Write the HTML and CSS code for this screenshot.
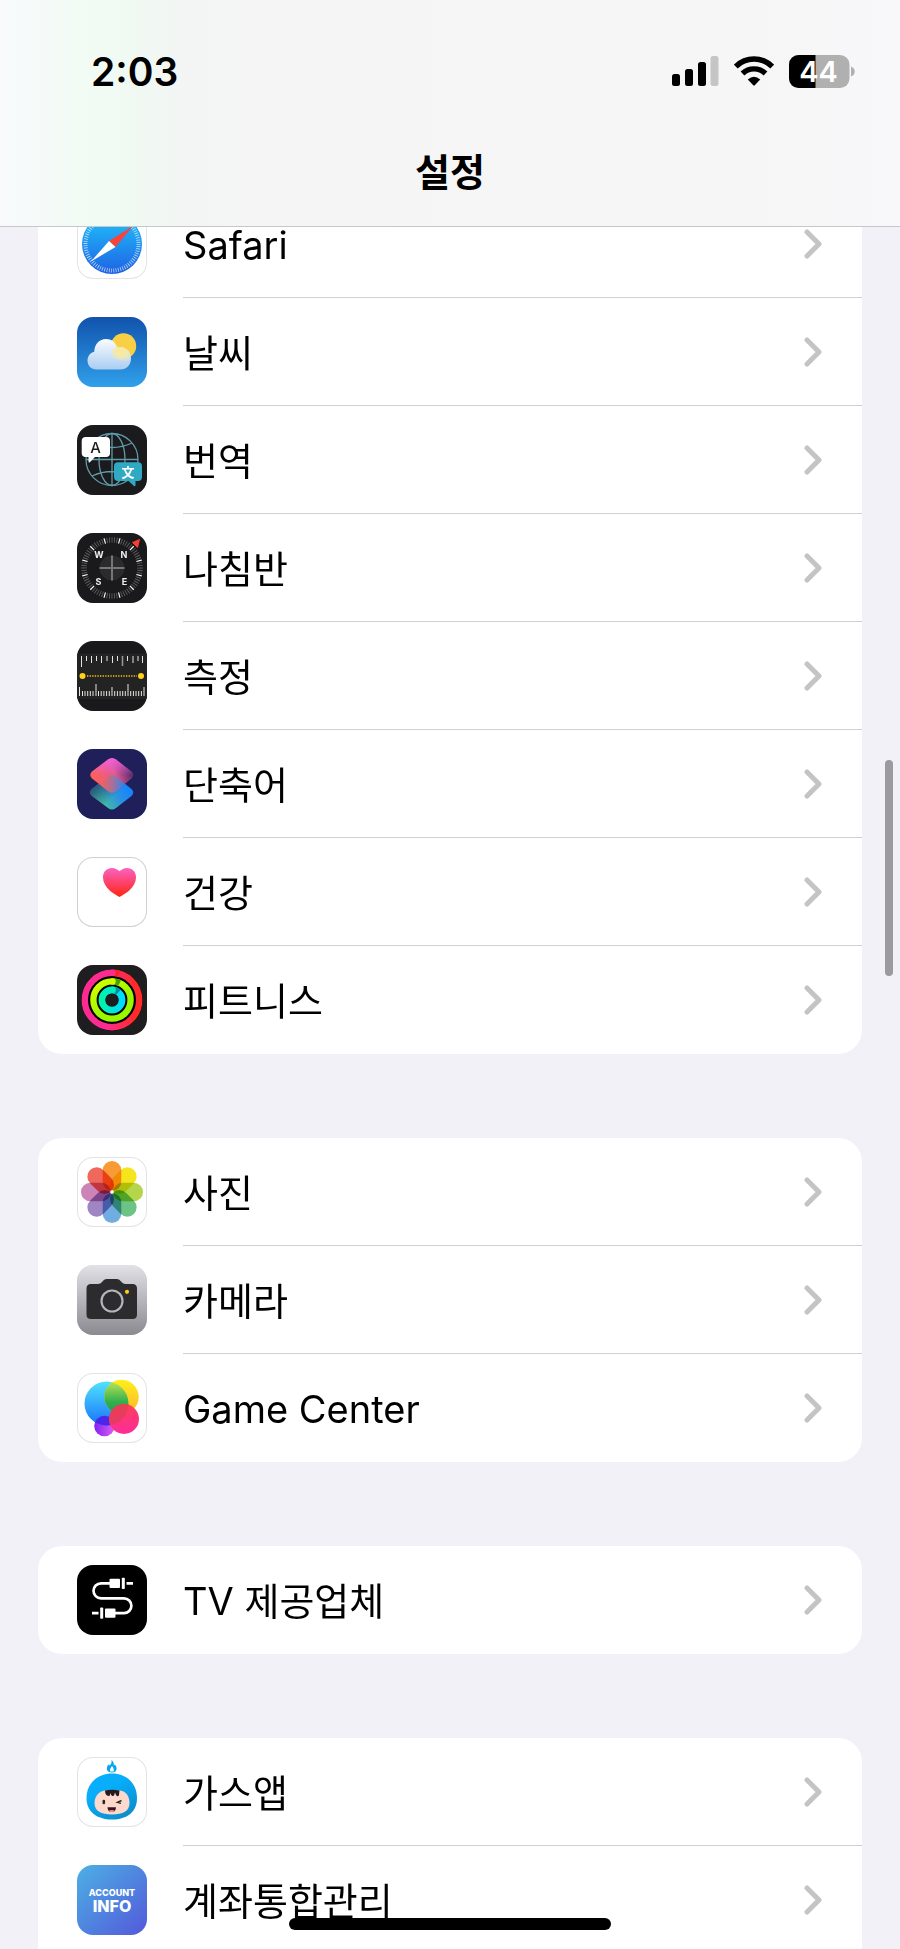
FILE: index.html
```html
<!DOCTYPE html>
<html lang="ko">
<head>
    <meta charset="UTF-8">
    <meta name="viewport" content="width=device-width, initial-scale=1.0">
    <title>설정</title>
    <link rel="stylesheet" href="styles.css">
</head>
<body>
    <header class="header">
        <div class="status-bar">
            <span class="time">2:03</span>
            <div class="status-icons">
                <svg width="47" height="30" viewBox="0 0 47 30">
                    <rect x="0" y="18" width="8" height="12" rx="2.5"/>
                    <rect x="13" y="13" width="8" height="17" rx="2.5"/>
                    <rect x="26" y="6" width="8" height="24" rx="2.5"/>
                    <rect x="38.500" y="0" width="8" height="30" rx="2.5" fill="#c5c5c5"/>
                </svg>
                <svg width="40" height="30" viewBox="0 0 40 30">
                    <path d="M1.800 10.500 A26 26 0 0 1 38.200 10.500" fill="none" stroke="#000" stroke-width="5.400"/>
                    <path d="M8.500 17.500 A16.500 16.500 0 0 1 31.500 17.500" fill="none" stroke="#000" stroke-width="5.400"/>
                    <path d="M13.800 23.400 Q20 18.200 26.200 23.400 L21 29 Q20 30 19 29 Z"/>
                </svg>
                <svg class="battery" width="66" height="33" viewBox="0 0 66 33">
                    <rect x="0" y="0" width="60.500" height="33" rx="9.500" fill="#b0b0b0"/>
                    <path d="M9.500 0 H26.500 V33 H9.500 A9.500 9.500 0 0 1 0 23.500 V9.500 A9.500 9.500 0 0 1 9.500 0 Z"/>
                    <path d="M62 11.500 Q65.700 13 65.700 16.500 T62 21.500 Z" fill="#b0b0b0"/>
                    <text x="29.500" y="27" text-anchor="middle" class="battery-text">44</text>
                </svg>
            </div>
        </div>
        <h1 class="title">설정</h1>
    </header>

    <main class="content">
        <nav class="group">
            <a class="row" href="#safari">
                <svg class="icon outlined" viewBox="0 0 70 70">
                    <defs><linearGradient id="safariBg" x1="0" y1="0" x2="0" y2="1"><stop offset="0" stop-color="#1fc4fb"/><stop offset="1" stop-color="#1f62e4"/></linearGradient></defs>
                    <circle cx="35" cy="35" r="30" fill="url(#safariBg)"/>
                    <circle cx="35" cy="35" r="26.500" fill="none" stroke="#fff" stroke-opacity="0.7" stroke-width="4" stroke-dasharray="0.800 1.500"/>
                    <path d="M56 17 L38.500 38 L32 32 Z" fill="#f8423a"/>
                    <path d="M14 52.500 L32 32 L38.500 38 Z" fill="#fff"/>
                </svg>
                <span class="cell"><span class="name">Safari</span><svg class="arrow" viewBox="0 0 18 30"><path d="M3 3 L15 15 L3 27"/></svg></span>
            </a>
            <a class="row" href="#weather">
                <svg class="icon" viewBox="0 0 70 70">
                    <defs>
                        <linearGradient id="weatherBg" x1="0" y1="0" x2="0" y2="1"><stop offset="0" stop-color="#1153ac"/><stop offset="1" stop-color="#30a0ea"/></linearGradient>
                        <linearGradient id="cloud" x1="0" y1="0" x2="0" y2="1"><stop offset="0" stop-color="#fbfcff"/><stop offset="1" stop-color="#a9cdf1"/></linearGradient>
                        <radialGradient id="glow" gradientUnits="userSpaceOnUse" cx="44" cy="33" r="14"><stop offset="0.4" stop-color="#f6e9a4"/><stop offset="1" stop-color="#f6e9a4" stop-opacity="0"/></radialGradient>
                    </defs>
                    <rect width="70" height="70" fill="url(#weatherBg)"/>
                    <circle cx="46.500" cy="29" r="12.700" fill="#fbcf45"/>
                    <path d="M19.500 52.500 C14 52.500 10.500 48.500 10.500 43.500 C10.500 39 13.500 35.600 17.200 34.700 C17.500 27 22.500 22 29 22 C34.500 22 38.500 25.500 40 30.300 C47.500 28.500 54 34 54 41.500 C54 48 49.500 52.500 43.500 52.500 Z" fill="url(#cloud)"/>
                    <path d="M36 41 L35 33 L40 30.300 C47.500 28.500 54 34 54 41.500 C54 43 53 45 53 45 Z" fill="url(#glow)"/>
                </svg>
                <span class="cell"><span class="name">날씨</span><svg class="arrow" viewBox="0 0 18 30"><path d="M3 3 L15 15 L3 27"/></svg></span>
            </a>
            <a class="row" href="#translate">
                <svg class="icon" viewBox="0 0 70 70">
                    <rect width="70" height="70" fill="#1b1b1d"/>
                    <g fill="none" stroke="#609baa" stroke-width="1.300">
                        <circle cx="35" cy="34.500" r="26"/>
                        <ellipse cx="35" cy="34.500" rx="13" ry="26"/>
                        <path d="M35 8.500 V60.500 M9 34.500 H61 M15 18 Q35 27 55 18 M15 51 Q35 42 55 51"/>
                    </g>
                    <path d="M8.700 12 H29 Q33 12 33 16 V28 Q33 32 29 32 H18 L12.500 37.500 Q11.500 38 11.500 36 V32 H8.700 Q4.700 32 4.700 28 V16 Q4.700 12 8.700 12 Z" fill="#fff"/>
                    <path d="M41 37.300 H61 Q65 37.300 65 41.300 V52 Q65 56 61 56 H58.500 V60 Q58.300 62 57 61 L51.500 56 H41 Q37 56 37 52 V41.300 Q37 37.300 41 37.300 Z" fill="#30a9c3"/>
                    <text x="18.500" y="27.500" font-size="15" text-anchor="middle" font-weight="500" fill="#1b1b1d">A</text>
                    <text x="51" y="51.500" font-size="13" text-anchor="middle" font-weight="700" fill="#fff">文</text>
                </svg>
                <span class="cell"><span class="name">번역</span><svg class="arrow" viewBox="0 0 18 30"><path d="M3 3 L15 15 L3 27"/></svg></span>
            </a>
            <a class="row" href="#compass">
                <svg class="icon" viewBox="0 0 70 70">
                    <rect width="70" height="70" fill="#1a1a1c"/>
                    <g fill="none" transform="rotate(15 35 35)">
                        <circle cx="35" cy="35" r="28" stroke="#68686a" stroke-width="5.500" pathLength="360" stroke-dasharray="1.600 3.400" stroke-dashoffset="0.800"/>
                        <circle cx="35" cy="35" r="28" stroke="#f4f4f4" stroke-width="5.500" pathLength="360" stroke-dasharray="2.400 27.600" stroke-dashoffset="1.200"/>
                    </g>
                    <path d="M62.500 6.500 L60.500 14.500 L55.500 9.500 Z" fill="#fb3c30" stroke="#fb3c30" stroke-linejoin="round"/>
                    <circle cx="35" cy="35" r="12.500" fill="#2b2b2d"/>
                    <path d="M35 22.500 V47.500 M22.500 35 H47.500" stroke="#767678" stroke-width="2"/>
                    <g font-size="9" font-weight="700" text-anchor="middle" fill="#eee">
                        <text x="22" y="25.300">W</text>
                        <text x="47" y="25.300">N</text>
                        <text x="21.500" y="52">S</text>
                        <text x="47.500" y="52">E</text>
                    </g>
                </svg>
                <span class="cell"><span class="name">나침반</span><svg class="arrow" viewBox="0 0 18 30"><path d="M3 3 L15 15 L3 27"/></svg></span>
            </a>
            <a class="row" href="#measure">
                <svg class="icon" viewBox="0 0 70 70">
                    <rect width="70" height="70" fill="#19191b"/>
                    <rect y="12.500" width="70" height="45.500" fill="#232324"/>
                    <g fill="none" stroke="#e4e4e4" stroke-width="1">
                        <path d="M4.500 15 V26 M9.500 15 V20 M14.500 15 V22 M19.500 15 V20 M24.500 15 V22 M30 15 V20 M35.500 15 V22 M40.500 15 V20 M50.500 15 V20 M56 15 V22 M61 15 V20 M65.500 15 V22"/>
                        <path d="M45.500 15 V25" stroke="#999" stroke-width="1.500"/>
                        <path d="M2.500 46 V55 M19 43 V55 M35 46 V55 M51 43 V55 M67 46 V55"/>
                        <path d="M5.500 50 V55 M8 50 V55 M10.700 50 V55 M13.300 50 V55 M16 50 V55 M21.500 50 V55 M24.200 50 V55 M26.900 50 V55 M29.600 50 V55 M32.300 50 V55 M37.700 50 V55 M40.400 50 V55 M43.100 50 V55 M45.700 50 V55 M48.300 50 V55 M53.700 50 V55 M56.400 50 V55 M59 50 V55 M61.700 50 V55 M64.400 50 V55"/>
                    </g>
                    <path d="M10 35 H60" stroke="#f8c51c" stroke-width="1.300" stroke-dasharray="1.300 1.300"/>
                    <circle cx="5.500" cy="35" r="3" fill="#ffd01c"/>
                    <circle cx="64" cy="35" r="3" fill="#ffd01c"/>
                </svg>
                <span class="cell"><span class="name">측정</span><svg class="arrow" viewBox="0 0 18 30"><path d="M3 3 L15 15 L3 27"/></svg></span>
            </a>
            <a class="row" href="#shortcuts">
                <svg class="icon" viewBox="0 0 70 70">
                    <defs>
                        <linearGradient id="cutTop" gradientUnits="userSpaceOnUse" x1="20" y1="34" x2="54" y2="24"><stop offset="0" stop-color="#fb615a"/><stop offset="0.550" stop-color="#e05a94"/><stop offset="1" stop-color="#5d2f6e"/></linearGradient>
                        <linearGradient id="cutPink" gradientUnits="userSpaceOnUse" x1="0" y1="8" x2="0" y2="26"><stop offset="0" stop-color="#f45fe0"/><stop offset="1" stop-color="#f45fe0" stop-opacity="0"/></linearGradient>
                        <linearGradient id="cutBottom" gradientUnits="userSpaceOnUse" x1="24" y1="56" x2="50" y2="38"><stop offset="0" stop-color="#45c29a"/><stop offset="0.600" stop-color="#2b92df"/><stop offset="1" stop-color="#1684ff"/></linearGradient>
                        <linearGradient id="cutFade" gradientUnits="userSpaceOnUse" x1="14" y1="38" x2="30" y2="54"><stop offset="0" stop-color="#264a78"/><stop offset="1" stop-color="#264a78" stop-opacity="0"/></linearGradient>
                        <linearGradient id="cutMix" gradientUnits="userSpaceOnUse" x1="25" y1="35" x2="46" y2="36"><stop offset="0" stop-color="#ef6064"/><stop offset="0.500" stop-color="#a8709a"/><stop offset="1" stop-color="#3b84de"/></linearGradient>
                    </defs>
                    <rect width="70" height="70" fill="#1f1f5a"/>
                    <path d="M31 27.500 Q35 24.500 39 27.500 L54.500 40 Q58 43.500 54.500 47 L39 59 Q35 62 31 59 L15 47 Q11.500 43.500 15 40 Z" fill="url(#cutBottom)"/>
                    <path d="M31 27.500 Q35 24.500 39 27.500 L54.500 40 Q58 43.500 54.500 47 L39 59 Q35 62 31 59 L15 47 Q11.500 43.500 15 40 Z" fill="url(#cutFade)"/>
                    <path d="M31 10.500 Q35 7.500 39 10.500 L54.500 22.500 Q58 26 54.500 29.500 L39 42 Q35 45 31 42 L15 29.500 Q11.500 26 15 22.500 Z" fill="url(#cutTop)"/>
                    <path d="M31 10.500 Q35 7.500 39 10.500 L54.500 22.500 Q57 25 56 27 H14 Q12.500 25 15 22.500 Z" fill="url(#cutPink)"/>
                    <path d="M31 27.500 Q35 24.500 39 27.500 L47.500 35 L39 42 Q35 45 31 42 L22.500 35 Z" fill="url(#cutMix)"/>
                </svg>
                <span class="cell"><span class="name">단축어</span><svg class="arrow" viewBox="0 0 18 30"><path d="M3 3 L15 15 L3 27"/></svg></span>
            </a>
            <a class="row" href="#health">
                <svg class="icon outlined dark" viewBox="0 0 70 70">
                    <defs><linearGradient id="heart" x1="0" y1="0" x2="0" y2="1"><stop offset="0" stop-color="#fb61c3"/><stop offset="1" stop-color="#ff2512"/></linearGradient></defs>
                    <path d="M42.500 40 C37 37 26 30.500 26 20.500 C26 14.500 30 11 34.800 11 C38.500 11 41 13 42.500 14.200 C44 13 46.500 11 50.200 11 C55 11 59 14.500 59 20.500 C59 30.500 48 37 42.500 40 Z" fill="url(#heart)"/>
                </svg>
                <span class="cell"><span class="name">건강</span><svg class="arrow" viewBox="0 0 18 30"><path d="M3 3 L15 15 L3 27"/></svg></span>
            </a>
            <a class="row" href="#fitness">
                <svg class="icon" viewBox="0 0 70 70">
                    <defs>
                        <linearGradient id="move"><stop offset="0.400" stop-color="#fb2b91"/><stop offset="0.900" stop-color="#ff2a2a"/></linearGradient>
                        <linearGradient id="exercise" x1="0" y1="0" x2="0.800" y2="1"><stop offset="0" stop-color="#d9ff00"/><stop offset="0.700" stop-color="#97f800"/></linearGradient>
                        <linearGradient id="stand"><stop offset="0" stop-color="#00f2ac"/><stop offset="1" stop-color="#00dcff"/></linearGradient>
                    </defs>
                    <rect width="70" height="70" fill="#1e1e20"/>
                    <circle cx="35" cy="35" r="30.500" fill="#000"/>
                    <g fill="none">
                        <circle cx="35" cy="35" r="27.200" stroke="url(#move)" stroke-width="6.400"/>
                        <circle cx="35" cy="35" r="18.600" stroke="url(#exercise)" stroke-width="6.400"/>
                        <circle cx="35" cy="35" r="10" stroke="url(#stand)" stroke-width="6.800"/>
                    </g>
                    <path d="M37 4.700 Q40 4.700 43 5.800 L41 12 Q38 11 37 11 Z" fill="#ff2216"/>
                    <path d="M37 13.400 Q41 13.400 44 15.500 L41 21 Q39 19.800 37 19.800 Z" fill="#45a100"/>
                    <path d="M37 22 Q41 22.500 43.500 25 L39 30 L37 28 Z" fill="#008f9f"/>
                    <circle cx="35.500" cy="7.800" r="3.200" fill="#fb2b91"/>
                    <circle cx="35.500" cy="16.500" r="3.200" fill="#d2fb00"/>
                    <circle cx="35.500" cy="25" r="3.400" fill="#00ecb9"/>
                    <circle cx="35" cy="35" r="6.500" fill="#1e1e20"/>
                </svg>
                <span class="cell"><span class="name">피트니스</span><svg class="arrow" viewBox="0 0 18 30"><path d="M3 3 L15 15 L3 27"/></svg></span>
            </a>
        </nav>

        <nav class="group">
            <a class="row" href="#photos">
                <svg class="icon outlined" viewBox="0 0 70 70">
                    <g class="petals">
                        <rect x="25.700" y="4" width="18.600" height="30" rx="9.300" fill="#f89b35"/>
                        <rect x="25.700" y="4" width="18.600" height="30" rx="9.300" fill="#f6e41e" transform="rotate(45 35 35)"/>
                        <rect x="25.700" y="4" width="18.600" height="30" rx="9.300" fill="#b5d64a" transform="rotate(90 35 35)"/>
                        <rect x="25.700" y="4" width="18.600" height="30" rx="9.300" fill="#6cc385" transform="rotate(135 35 35)"/>
                        <rect x="25.700" y="4" width="18.600" height="30" rx="9.300" fill="#71ade0" transform="rotate(180 35 35)"/>
                        <rect x="25.700" y="4" width="18.600" height="30" rx="9.300" fill="#9f86c3" transform="rotate(225 35 35)"/>
                        <rect x="25.700" y="4" width="18.600" height="30" rx="9.300" fill="#cc83b7" transform="rotate(270 35 35)"/>
                        <rect x="25.700" y="4" width="18.600" height="30" rx="9.300" fill="#f0675b" transform="rotate(315 35 35)"/>
                    </g>
                    <circle cx="35" cy="35" r="1.800" fill="#fff"/>
                </svg>
                <span class="cell"><span class="name">사진</span><svg class="arrow" viewBox="0 0 18 30"><path d="M3 3 L15 15 L3 27"/></svg></span>
            </a>
            <a class="row" href="#camera">
                <svg class="icon outlined" viewBox="0 0 70 70">
                    <defs><linearGradient id="cameraBg" x1="0" y1="0" x2="0" y2="1"><stop offset="0" stop-color="#e2e1e7"/><stop offset="1" stop-color="#8b8a90"/></linearGradient></defs>
                    <rect width="70" height="70" fill="url(#cameraBg)"/>
                    <path d="M14 19 H21 Q23.500 19 25 17 Q27 14 29.500 14 H40 Q42.500 14 44.500 17 Q46 19 48.500 19 H55.500 Q60 19 60 23.500 V49.500 Q60 54 55.500 54 H14 Q9.500 54 9.500 49.500 V23.500 Q9.500 19 14 19 Z" fill="#2c2c2e"/>
                    <circle cx="35" cy="36" r="10.500" fill="#2c2c2e" stroke="#b5b5b9" stroke-width="2.200"/>
                    <circle cx="50" cy="26.800" r="2.100" fill="#fccb17"/>
                </svg>
                <span class="cell"><span class="name">카메라</span><svg class="arrow" viewBox="0 0 18 30"><path d="M3 3 L15 15 L3 27"/></svg></span>
            </a>
            <a class="row" href="#gamecenter">
                <svg class="icon outlined" viewBox="0 0 70 70">
                    <defs>
                        <linearGradient id="gcBlue" x1="0" y1="0" x2="0" y2="1"><stop offset="0" stop-color="#50e2fe"/><stop offset="1" stop-color="#1773fb"/></linearGradient>
                        <linearGradient id="gcYellow" x1="0" y1="0" x2="0" y2="1"><stop offset="0" stop-color="#ffef1c"/><stop offset="1" stop-color="#fdb42a"/></linearGradient>
                        <linearGradient id="gcGreen" gradientUnits="userSpaceOnUse" x1="0" y1="8" x2="0" y2="38"><stop offset="0" stop-color="#bfe557"/><stop offset="0.700" stop-color="#30b04c"/><stop offset="1" stop-color="#2a9c5d"/></linearGradient>
                        <linearGradient id="gcRed" x1="0" y1="0" x2="0" y2="1"><stop offset="0" stop-color="#fb4058"/><stop offset="1" stop-color="#fe2b9b"/></linearGradient>
                        <linearGradient id="gcPurple"><stop offset="0" stop-color="#8222f5"/><stop offset="1" stop-color="#dd62ec"/></linearGradient>
                        <clipPath id="gcClip"><circle cx="29.500" cy="30.500" r="22"/></clipPath>
                    </defs>
                    <circle cx="27.500" cy="53" r="10.300" fill="url(#gcPurple)"/>
                    <circle cx="29.500" cy="30.500" r="22" fill="url(#gcBlue)"/>
                    <circle cx="44.500" cy="24" r="17.200" fill="url(#gcYellow)"/>
                    <g clip-path="url(#gcClip)">
                        <circle cx="44.500" cy="24" r="17.200" fill="url(#gcGreen)"/>
                        <circle cx="27.500" cy="53" r="10.300" fill="#4d27e8"/>
                    </g>
                    <circle cx="47" cy="46" r="15" fill="url(#gcRed)"/>
                    <circle cx="47" cy="46" r="15" fill="#d8404e" fill-opacity="0.6" clip-path="url(#gcClip)"/>
                </svg>
                <span class="cell"><span class="name">Game Center</span><svg class="arrow" viewBox="0 0 18 30"><path d="M3 3 L15 15 L3 27"/></svg></span>
            </a>
        </nav>

        <nav class="group">
            <a class="row" href="#tv">
                <svg class="icon" viewBox="0 0 70 70">
                    <rect width="70" height="70" fill="#000"/>
                    <path d="M33 18.300 H24 A7.500 7.500 0 0 0 24 33.300 H47 A7.400 7.400 0 0 1 47 48.100 H38 M49.500 18.300 H56 M15 48.100 H21.500" fill="none" stroke="#fff" stroke-width="2.700"/>
                    <g fill="#fff">
                        <rect x="32.500" y="13.700" width="10.500" height="9.200" rx="1"/>
                        <rect x="44.800" y="12.700" width="3" height="11.300" rx="0.800"/>
                        <rect x="28" y="43.500" width="10.500" height="9.200" rx="1"/>
                        <rect x="23.200" y="42.400" width="3" height="11.300" rx="0.800"/>
                    </g>
                </svg>
                <span class="cell"><span class="name">TV 제공업체</span><svg class="arrow" viewBox="0 0 18 30"><path d="M3 3 L15 15 L3 27"/></svg></span>
            </a>
        </nav>

        <nav class="group apps">
            <a class="row" href="#gasapp">
                <svg class="icon outlined" viewBox="0 0 70 70">
                    <defs><linearGradient id="hood" x1="0.200" y1="0" x2="0.800" y2="1"><stop offset="0.300" stop-color="#08aefc"/><stop offset="1" stop-color="#0b8cc9"/></linearGradient></defs>
                    <path d="M34.500 2.700 C37 5 37 7 36.800 8.500 L38 7.500 C40.500 10.500 40.500 15.500 34.800 15.500 C29.500 15.500 28.500 11 31.500 7.500 L32.500 8.500 C34.500 7 34.800 5 34.500 2.700 Z" fill="#08a6f2"/>
                    <path d="M35 9 Q37.500 12 36.500 14.500 H33 Q32.500 12 35 9 Z" fill="#fff"/>
                    <path d="M35 16.500 C50 16.500 60 27 60 41 C60 55 50 62.500 35 62.500 C20 62.500 9.500 55 9.500 41 C9.500 27 20 16.500 35 16.500 Z" fill="url(#hood)"/>
                    <path d="M28 33.500 H43 C49 34 52.500 39.500 52.500 46 C52.500 54 46 57.500 35 57.500 C24 57.500 17.500 54 17.500 46 C17.500 39.500 22 34 28 33.500 Z" fill="#fcd9cc"/>
                    <path d="M28 33.500 Q35 32 42.500 33.500 L42 38 Q41 40.500 39 38 L38 35.500 L37 38.500 Q34 40.500 33.500 36 L32.500 39 Q28 39 28 33.500 Z" fill="#251b1e"/>
                    <rect x="25.500" y="42.700" width="2.600" height="4.600" rx="1.200" fill="#33231f"/>
                    <path d="M44.500 43.500 L40.500 45.300 L44 46.300" fill="none" stroke="#33231f" stroke-width="1.400"/>
                    <path d="M30.500 50.300 H39 Q39 55 34.800 55 Q30.500 55 30.500 50.300 Z" fill="#35171a"/>
                    <ellipse cx="34.800" cy="54" rx="2.800" ry="1" fill="#ff8d94"/>
                </svg>
                <span class="cell"><span class="name">가스앱</span><svg class="arrow" viewBox="0 0 18 30"><path d="M3 3 L15 15 L3 27"/></svg></span>
            </a>
            <a class="row" href="#accountinfo">
                <svg class="icon" viewBox="0 0 70 70">
                    <defs><linearGradient id="accountBg" x1="0" y1="0" x2="1" y2="1"><stop offset="0" stop-color="#4cb0e4"/><stop offset="1" stop-color="#5359da"/></linearGradient></defs>
                    <rect width="70" height="70" fill="url(#accountBg)"/>
                    <g fill="#fff" font-weight="800" text-anchor="middle">
                        <text x="35" y="31" font-size="9">ACCOUNT</text>
                        <text x="35" y="47" font-size="16">INFO</text>
                    </g>
                </svg>
                <span class="cell"><span class="name">계좌통합관리</span><svg class="arrow" viewBox="0 0 18 30"><path d="M3 3 L15 15 L3 27"/></svg></span>
            </a>
        </nav>
    </main>

    <div class="scrollbar"></div>
    <div class="home-bar"></div>
</body>
</html>
```

FILE: styles.css
```css
* {
    box-sizing: border-box;
}
body {
    margin: 0;
    height: 100vh;
    overflow: hidden;
    background: #f2f1f8;
    color: #000;
    font-family: Inter, "Noto Sans CJK KR", sans-serif;
}

/* header */
.header {
    position: fixed;
    top: 0;
    left: 0;
    right: 0;
    z-index: 2;
    height: 227px;
    border-bottom: 1px solid #c6c7c8;
    background: linear-gradient(to right, #f8fafb 0%, #f5faf8 5%, #f2fbf4 9%, #f0f9f2 14%, #f3f5f4 21%, #f5f5f5 30%, #f6f6f6 85%, #f8f8fb 100%);
}
.status-bar {
    display: flex;
    justify-content: space-between;
    align-items: center;
    height: 142px;
    padding: 0 45px 0 91px;
}
.time {
    font-size: 39px;
    font-weight: 600;
}
.status-icons {
    display: flex;
    align-items: center;
    gap: 15px;
}
.battery {
    overflow: visible;
}
.battery-text {
    font-size: 29px;
    font-weight: 600;
    fill: #fff;
}
.title {
    margin: 0;
    font-size: 38px;
    font-weight: 600;
    line-height: 60px;
    text-align: center;
}

/* list */
.content {
    display: flex;
    flex-direction: column;
    gap: 84px;
    padding: 190px 38px 0;
}
.group {
    flex-shrink: 0;
    background: #fff;
    border-radius: 24px;
    overflow: hidden;
}
.apps {
    border-radius: 24px 24px 0 0;
}
.row {
    display: flex;
    align-items: center;
    gap: 36px;
    height: 108px;
    padding-left: 39px;
    color: inherit;
    text-decoration: none;
}
.icon {
    flex-shrink: 0;
    width: 70px;
    height: 70px;
    border-radius: 16px;
}
.outlined {
    box-shadow: inset 0 0 0 1px #e3e3e6;
}
.dark {
    box-shadow: inset 0 0 0 1px #cfcfd1;
}
.petals rect {
    mix-blend-mode: multiply;
}
.cell {
    flex: 1;
    display: flex;
    justify-content: space-between;
    align-items: center;
    height: 100%;
    padding-right: 40px;
    border-bottom: 1px solid #d0d0d2;
}
.row:last-child .cell {
    border-bottom: none;
}
.name {
    padding-top: 2px;
    font-size: 38px;
    line-height: 56px;
}
.arrow {
    width: 18px;
    height: 30px;
    fill: none;
    stroke: #c4c4c6;
    stroke-width: 5;
    stroke-linecap: round;
    stroke-linejoin: round;
}

.scrollbar {
    position: fixed;
    top: 39%;
    right: 7px;
    width: 8px;
    height: 216px;
    border-radius: 4px;
    background: #9b9a9f;
}
.home-bar {
    position: fixed;
    left: 50%;
    bottom: 19px;
    z-index: 2;
    width: 322px;
    height: 12px;
    margin-left: -161px;
    border-radius: 6px;
    background: #000;
}
```
